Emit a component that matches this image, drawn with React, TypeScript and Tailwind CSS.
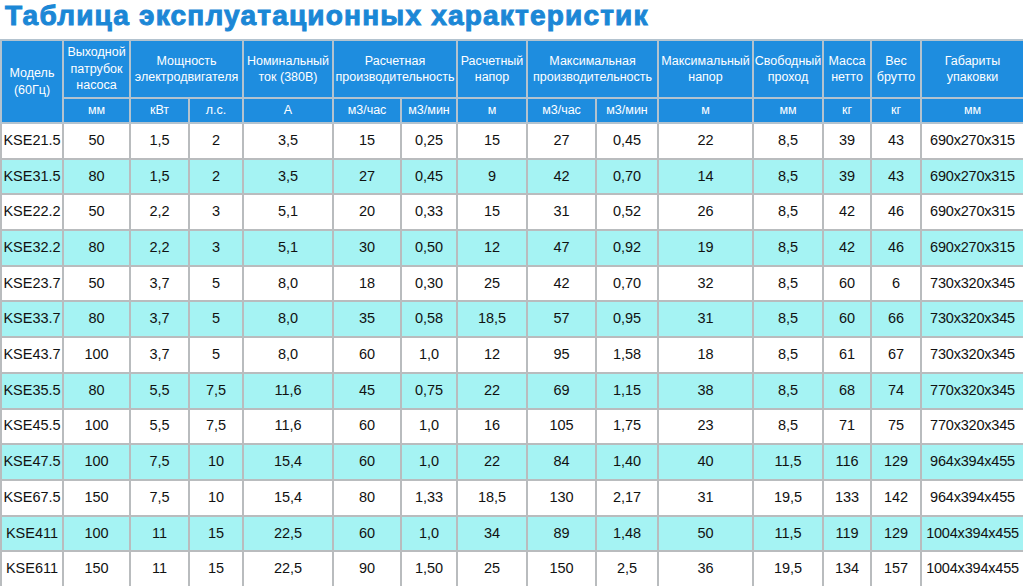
import React from "react";

const widths = [62, 67, 59, 54, 90, 68, 56, 70, 69, 62, 95, 70, 48, 50, 103];

const rows: string[][] = [
  ["KSE21.5", "50", "1,5", "2", "3,5", "15", "0,25", "15", "27", "0,45", "22", "8,5", "39", "43", "690x270x315"],
  ["KSE31.5", "80", "1,5", "2", "3,5", "27", "0,45", "9", "42", "0,70", "14", "8,5", "39", "43", "690x270x315"],
  ["KSE22.2", "50", "2,2", "3", "5,1", "20", "0,33", "15", "31", "0,52", "26", "8,5", "42", "46", "690x270x315"],
  ["KSE32.2", "80", "2,2", "3", "5,1", "30", "0,50", "12", "47", "0,92", "19", "8,5", "42", "46", "690x270x315"],
  ["KSE23.7", "50", "3,7", "5", "8,0", "18", "0,30", "25", "42", "0,70", "32", "8,5", "60", "6", "730x320x345"],
  ["KSE33.7", "80", "3,7", "5", "8,0", "35", "0,58", "18,5", "57", "0,95", "31", "8,5", "60", "66", "730x320x345"],
  ["KSE43.7", "100", "3,7", "5", "8,0", "60", "1,0", "12", "95", "1,58", "18", "8,5", "61", "67", "730x320x345"],
  ["KSE35.5", "80", "5,5", "7,5", "11,6", "45", "0,75", "22", "69", "1,15", "38", "8,5", "68", "74", "770x320x345"],
  ["KSE45.5", "100", "5,5", "7,5", "11,6", "60", "1,0", "16", "105", "1,75", "23", "8,5", "71", "75", "770x320x345"],
  ["KSE47.5", "100", "7,5", "10", "15,4", "60", "1,0", "22", "84", "1,40", "40", "11,5", "116", "129", "964x394x455"],
  ["KSE67.5", "150", "7,5", "10", "15,4", "80", "1,33", "18,5", "130", "2,17", "31", "19,5", "133", "142", "964x394x455"],
  ["KSE411", "100", "11", "15", "22,5", "60", "1,0", "34", "89", "1,48", "50", "11,5", "119", "129", "1004x394x455"],
  ["KSE611", "150", "11", "15", "22,5", "90", "1,50", "25", "150", "2,5", "36", "19,5", "134", "157", "1004x394x455"],
];

const units = ["мм", "кВт", "л.с.", "А", "м3/час", "м3/мин", "м", "м3/час", "м3/мин", "м", "мм", "кг", "кг", "мм"];

const th = "border-2 border-[#b3c3cf] bg-[#1e8ddf] text-white font-normal text-center align-middle p-0 leading-[16.5px]";
const td = "border-2 border-[#b9bcbe] text-center align-middle p-0 text-[14.5px] text-[#111]";

export default function App() {
  return (
    <div className="w-[1023px] h-[586px] overflow-hidden bg-white" style={{ fontFamily: '"Liberation Sans", Arial, sans-serif' }}>
      <div className="h-[39px] pl-[5px] text-[28px] leading-[32px] font-bold text-[#1b87d6] tracking-[1.2px] whitespace-nowrap" style={{ WebkitTextStroke: "1px #1b87d6" }}>
        Таблица эксплуатационных характеристик
      </div>
      <table className="table-fixed border-collapse w-[1023px] text-[12.5px]">
        <colgroup>
          {widths.map((w, i) => (
            <col key={i} style={{ width: w }} />
          ))}
        </colgroup>
        <thead>
          <tr className="h-[58px]">
            <th rowSpan={2} className={th}>Модель<br />(60Гц)</th>
            <th className={th}>Выходной<br />патрубок<br />насоса</th>
            <th colSpan={2} className={th}>Мощность<br />электродвигателя</th>
            <th className={th}>Номинальный<br />ток (380В)</th>
            <th colSpan={2} className={th}>Расчетная<br />производительность</th>
            <th className={th}>Расчетный<br />напор</th>
            <th colSpan={2} className={th}>Максимальная<br />производительность</th>
            <th className={th}>Максимальный<br />напор</th>
            <th className={th}>Свободный<br />проход</th>
            <th className={th}>Масса<br />нетто</th>
            <th className={th}>Вес<br />брутто</th>
            <th className={th}>Габариты<br />упаковки</th>
          </tr>
          <tr className="h-[25px]">
            {units.map((u, i) => (
              <th key={i} className={th}>{u}</th>
            ))}
          </tr>
        </thead>
        <tbody>
          {rows.map((r, ri) => (
            <tr key={ri} className={ri % 2 === 1 ? "h-[35.7px] bg-[#a5f3f3]" : "h-[35.7px] bg-white"}>
              {r.map((c, ci) => (
                <td key={ci} className={td + (ci === 14 ? " whitespace-nowrap tracking-[-0.2px]" : "")}>{c}</td>
              ))}
            </tr>
          ))}
        </tbody>
      </table>
    </div>
  );
}
